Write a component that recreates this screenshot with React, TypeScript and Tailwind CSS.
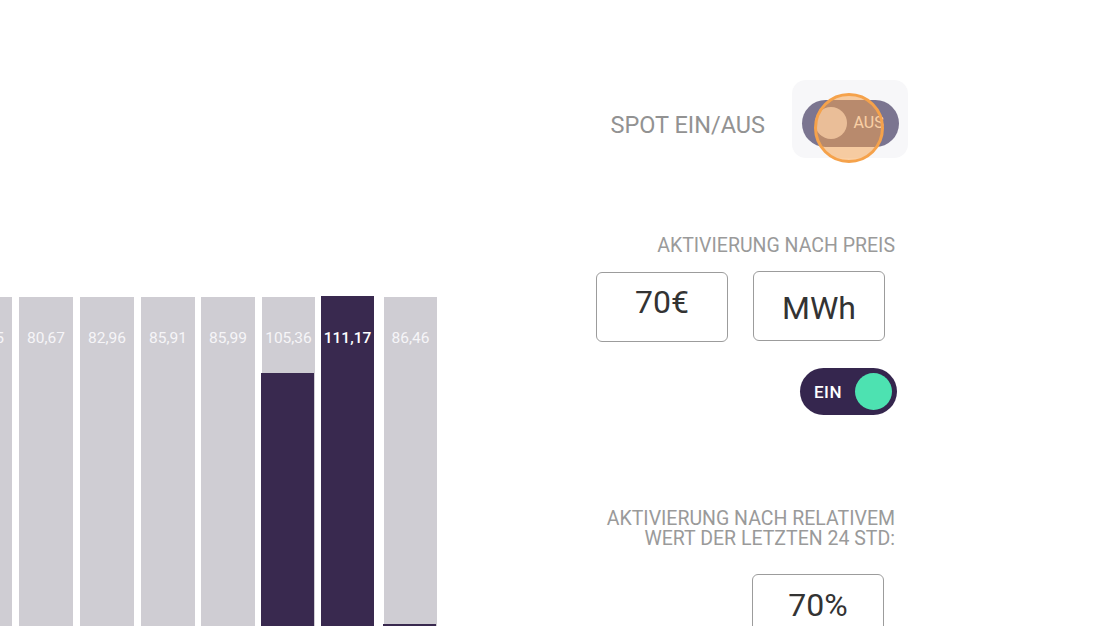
import React from "react";

export default function App() {
  return (
    <div className="w-[1120px] h-[626px] overflow-hidden bg-white flex font-['Roboto',sans-serif]">
      {/* Chart */}
      <div className="w-[596px] h-full overflow-hidden pt-[297px]">
        <div className="flex items-start h-full ml-[-42px]">
          <div className="w-[54px] h-full bg-[#cfcdd3] flex flex-col items-center">
            <span className="mt-[32px] text-[15.5px] leading-[18px] text-[#f6f5f8]">79,15</span>
          </div>
          <div className="ml-[7px] w-[54px] h-full bg-[#cfcdd3] flex flex-col items-center">
            <span className="mt-[32px] text-[15.5px] leading-[18px] text-[#f6f5f8]">80,67</span>
          </div>
          <div className="ml-[7px] w-[54px] h-full bg-[#cfcdd3] flex flex-col items-center">
            <span className="mt-[32px] text-[15.5px] leading-[18px] text-[#f6f5f8]">82,96</span>
          </div>
          <div className="ml-[7px] w-[54px] h-full bg-[#cfcdd3] flex flex-col items-center">
            <span className="mt-[32px] text-[15.5px] leading-[18px] text-[#f6f5f8]">85,91</span>
          </div>
          <div className="ml-[6px] w-[54px] h-full bg-[#cfcdd3] flex flex-col items-center">
            <span className="mt-[32px] text-[15.5px] leading-[18px] text-[#f6f5f8]">85,99</span>
          </div>
          <div className="ml-[7px] w-[53px] h-full bg-[#cfcdd3] flex flex-col items-center">
            <span className="mt-[32px] text-[15.5px] leading-[18px] text-[#f6f5f8]">105,36</span>
            <div className="flex-1" />
            <div className="w-[53px] h-[253px] -ml-[2px] bg-[#39294f]" />
          </div>
          <div className="ml-[6px] -mt-[1px] w-[53px] h-[330px] bg-[#39294f] flex flex-col items-center">
            <span className="mt-[33px] text-[15.5px] leading-[18px] font-medium text-white">111,17</span>
          </div>
          <div className="ml-[10px] w-[53px] h-full bg-[#cfcdd3] flex flex-col items-center">
            <span className="mt-[32px] text-[15.5px] leading-[18px] text-[#f6f5f8]">86,46</span>
            <div className="flex-1" />
            <div className="w-[53px] h-[2px] -ml-[3px] bg-[#39294f]" />
          </div>
        </div>
      </div>

      {/* Right panel */}
      <div className="w-[312px] flex flex-col">
        <div className="mt-[80px] h-[78px] flex items-center justify-end">
          <span className="pt-[12px] text-[23.5px] leading-[28px] text-[#929292]">SPOT EIN/AUS</span>
          <div className="relative ml-[27px] w-[116px] h-[78px] rounded-[14px] bg-[#f7f7f9] flex items-center justify-center">
            <div className="mt-[8px] w-[97px] h-[47px] rounded-full bg-[#7b7590] flex items-center pl-[13px]">
              <div className="w-[32px] h-[32px] rounded-full bg-[#dedce6]" />
              <span className="ml-[7px] text-[16px] leading-[20px] text-white">AUS</span>
            </div>
            <div className="absolute left-[22px] top-[13px] w-[70px] h-[70px] rounded-full border-[3px] border-[#f5a24b] bg-[#f5a04a]/50" />
          </div>
        </div>

        <div className="mt-[78px] pr-[13px] text-right text-[19.5px] leading-[20px] text-[#9a9a9a]">
          AKTIVIERUNG NACH PREIS
        </div>

        <div className="mt-[16px] flex">
          <div className="w-[132px] h-[70px] rounded-[6px] border border-[#9c9c9c] flex items-center justify-center pb-[10px]">
            <span className="text-[32px] leading-[36px] text-[#333333]">70€</span>
          </div>
          <div className="ml-[25px] -mt-[1px] w-[132px] h-[70px] rounded-[6px] border border-[#9c9c9c] flex items-center justify-center pt-[4px]">
            <span className="text-[32px] leading-[36px] text-[#333333]">MWh</span>
          </div>
        </div>

        <div className="mt-[26px] flex justify-end pr-[11px]">
          <div className="w-[97px] h-[47px] rounded-full bg-[#35264e] flex items-center pl-[14px] pr-[5px]">
            <span className="text-[17px] leading-[20px] font-medium tracking-[0.5px] text-white">EIN</span>
            <div className="ml-auto w-[37px] h-[37px] rounded-full bg-[#4de2b1]" />
          </div>
        </div>

        <div className="mt-[94px] pr-[13px] text-right text-[19.5px] leading-[20px] text-[#9a9a9a]">
          AKTIVIERUNG NACH RELATIVEM
          <br />
          WERT DER LETZTEN 24 STD:
        </div>

        <div className="mt-[25px] flex justify-end pr-[24px]">
          <div className="w-[132px] h-[70px] rounded-[6px] border border-[#9c9c9c] flex items-center justify-center pb-[8px]">
            <span className="text-[32px] leading-[36px] text-[#333333]">70%</span>
          </div>
        </div>
      </div>
    </div>
  );
}
